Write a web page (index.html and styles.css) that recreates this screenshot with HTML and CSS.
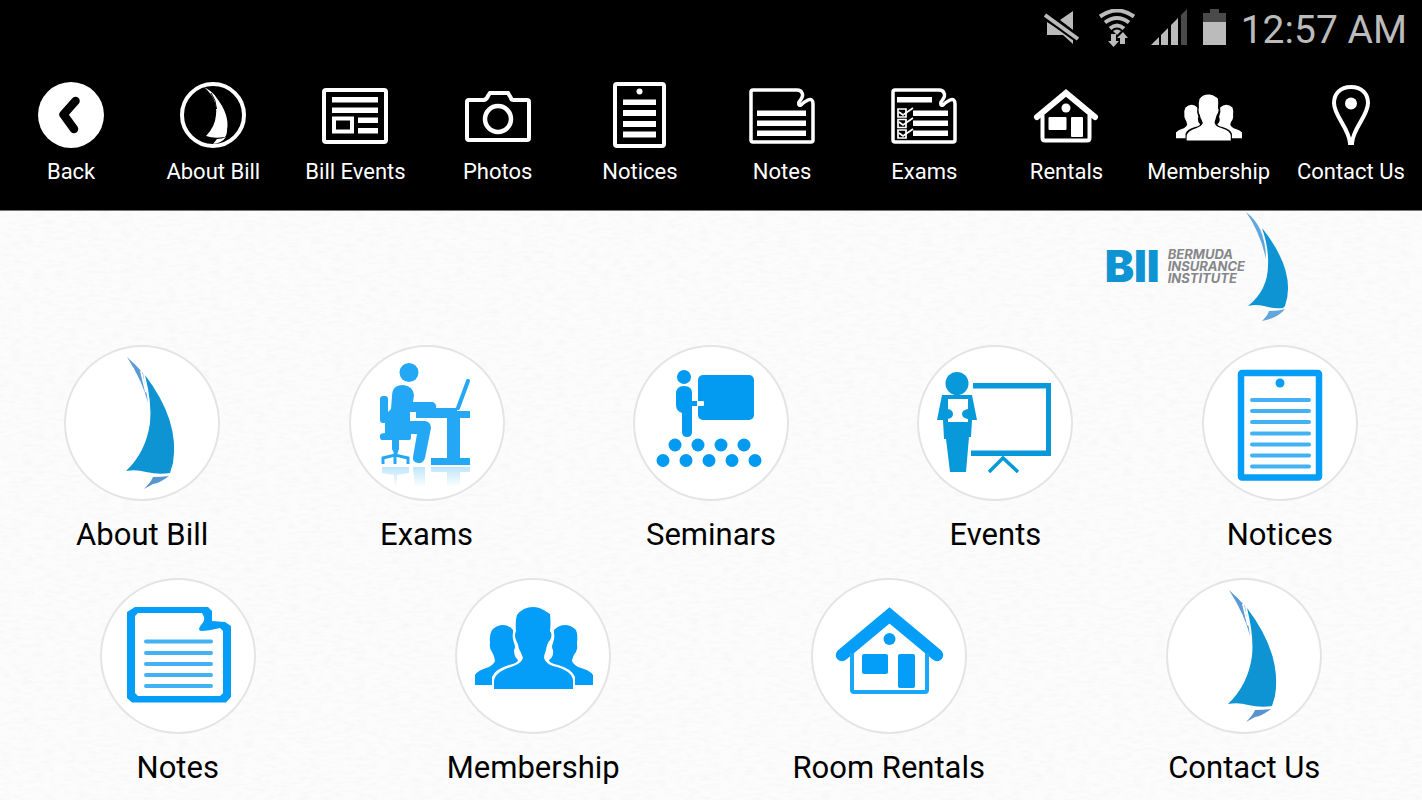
FILE: index.html
```html
<!DOCTYPE html>
<html lang="en">
<head>
<meta charset="utf-8">
<meta name="viewport" content="width=device-width, initial-scale=1">
<title>Bermuda Insurance Institute</title>
<link rel="stylesheet" href="styles.css">
</head>
<body>
<svg class="defs" width="0" height="0" aria-hidden="true">
  <symbol id="people" viewBox="0 0 118 82">
    <path d="M58 0C66 0 70 4 75 7Q76 16 75 24Q78 28 75 33Q72 36 71 43Q69 48 69 51Q71 58 82 60Q98 65 98 74V82H19V74Q20 65 36 60Q46 57 48 51Q46 45 44 42Q43 36 41 33Q39 28 41 24Q40 14 42 8Q48 0 58 0Z"/>
    <path d="M28 18Q34 18 38 23V26Q37 30 39 36Q41 40 39 43Q39 50 43 53Q43 56 34 58Q20 62 17 70V78H0V68Q3 63 14 60Q19 57 20 54Q19 48 17 45Q14 41 15 36Q14 28 17 23Q22 18 28 18Z"/>
    <path d="M90 18Q84 18 79 23V26Q80 30 78 36Q76 40 78 43Q79 50 74 53Q74 56 83 58Q97 62 100 70V78H118V68Q115 63 103 60Q98 57 97 54Q98 48 101 45Q103 41 102 36Q103 28 101 23Q96 18 90 18Z"/>
  </symbol>
  <symbol id="sail" viewBox="0 0 156 156">
    <path fill="#5a9bd5" d="M63 12Q72 20 79 28L81 41Q83 49 84 58Q79 37 63 12Z"/>
    <path fill="#fff" d="M76 26L78 26L83 48L81 47Z"/>
    <path fill="#0e93d3" d="M81 30Q116 76 109 118L106 128Q95 130 82 127Q72 124 62 126Q82 107 86 78Q88 58 81 30Z"/>
    <path fill="#5a94cf" d="M89 132Q97 132 105 131Q96 138 89 139L80 144Q87 137 89 132Z"/>
  </symbol>
</svg>

<header class="top">
  <div class="status">
    <svg width="36" height="36" viewBox="0 0 36 36" aria-label="Muted"><path fill="#bbb" d="M16 11L29 2V21ZM3 13V26H19L29 35V29Z"/><path stroke="#000" stroke-width="8" d="M1 6L34 30"/><path stroke="#bbb" stroke-width="4" d="M1 6L34 30"/></svg>
    <svg class="wifi" width="38" height="40" viewBox="0 0 38 40" aria-label="Wi-Fi"><g fill="none" stroke="#bbb" stroke-width="4"><path d="M2 7.500Q19-4.500 36 7.500M7 13.500Q19 4.500 31 13.500M12 19.500Q19 13.500 26 19.500"/></g><path fill="#bbb" d="M15 22Q19 19 23 22L19 26ZM13 25H18V32H21L15.500 38L10 32H13ZM22 35V29H19L25 23L30 29H27V35Z"/></svg>
    <svg class="signal" width="37" height="37" viewBox="0 0 37 37" aria-label="Signal"><path fill="#bbb" d="M0 36L8 28V36ZM10 26L17 19V36H10ZM20 16L27 9V36H20Z"/><path fill="#4a4a4a" d="M30 6L36 0V36H30Z"/></svg>
    <svg class="battery" width="23" height="36" viewBox="0 0 23 36" aria-label="Battery"><path fill="#4a4a4a" d="M7 0H16V4H23V13H0V4H7Z"/><path fill="#bbb" d="M0 13H23V36H0Z"/></svg>
    <time class="clock">12:57 AM</time>
  </div>
  <nav class="nav">
    <a href="#back"><svg viewBox="0 0 66 66"><circle cx="33" cy="33" r="33" fill="#fff"/><path d="M37.500 19L25.500 32.500L36 47" fill="none" stroke="#000" stroke-width="8.500" stroke-linecap="round" stroke-linejoin="round"/></svg>Back</a>
    <a href="#about"><svg viewBox="0 0 66 66"><circle cx="33" cy="33" r="31" fill="none" stroke="#fff" stroke-width="4"/><path fill="#fff" d="M24 5Q33 10 36 15Q50 33 47 48Q47 53 45 55Q34 57 26 54Q35 45 36 33Q38 17 24 5ZM37 57Q42 57 46 55Q42 61 33 62Z"/><path d="M31 11Q36 18 36.500 27" fill="none" stroke="#000" stroke-width="1"/></svg>About Bill</a>
    <a href="#bill-events"><svg viewBox="0 0 66 66"><rect x="2" y="8" width="62" height="52" rx="2" fill="none" stroke="#fff" stroke-width="4"/><path fill="#fff" d="M10 15H56V20.500H10ZM10 25.500H56V31H10ZM36 35.500H56V41H36ZM36 46H56V51.500H36Z"/><rect x="12" y="36.500" width="18" height="13" fill="none" stroke="#fff" stroke-width="4"/></svg>Bill Events</a>
    <a href="#photos"><svg viewBox="0 0 66 66"><path d="M4 18H19Q22 17 23 14L25 11H43L46 16Q46 18 49 18H62Q64 18 64 20V56Q64 58 62 58H4Q2 58 2 56V20Q2 18 4 18Z" fill="none" stroke="#fff" stroke-width="4"/><circle cx="33" cy="37" r="13" fill="none" stroke="#fff" stroke-width="4.500"/></svg>Photos</a>
    <a href="#notices"><svg viewBox="0 0 66 66"><rect x="8" y="2" width="49" height="62" rx="2" fill="none" stroke="#fff" stroke-width="4"/><circle cx="32.500" cy="9.500" r="3" fill="#fff"/><path fill="#fff" d="M16 17.500H49V23H16ZM16 28H49V34H16ZM16 39H49V45H16ZM16 49.500H49V55.500H16Z"/></svg>Notices</a>
    <a href="#notes"><svg viewBox="0 0 66 66"><path d="M48 8H4Q2 8 2 10V58Q2 60 4 60H62Q64 60 64 58V22Q64 16 59 18Q55 20 52 23Q49 24 50 20Q55 14 53 11Q52 8 48 8Z" fill="none" stroke="#fff" stroke-width="3.500"/><path fill="#fff" d="M8 28.500H57V34H8ZM8 38.500H57V44H8ZM8 48.500H57V54H8Z"/></svg>Notes</a>
    <a href="#exams"><svg viewBox="0 0 66 66"><path d="M48 8H4Q2 8 2 10V58Q2 60 4 60H62Q64 60 64 58V22Q64 16 59 18Q55 20 52 23Q49 24 50 20Q55 14 53 11Q52 8 48 8Z" fill="none" stroke="#fff" stroke-width="3.500"/><path fill="#fff" d="M6 15H41V20.500H6ZM22 28.500H57V34H22ZM22 38.500H57V44H22ZM22 48.500H57V54H22Z"/><g fill="none" stroke="#fff" stroke-width="1.700"><path d="M7 27H15V35H7ZM7 37.500H15V45.500H7ZM7 48H15V56H7Z"/><path d="M8 30L12 33L22 26M8 40L12 43L22 36M8 51L12 54L22 47"/></g></svg>Exams</a>
    <a href="#rentals"><svg viewBox="0 0 66 66"><path d="M4 35L33 11L62 35" fill="none" stroke="#fff" stroke-width="6" stroke-linecap="round"/><path d="M9.500 33V56Q9.500 58.500 12 58.500H54Q56.500 58.500 56.500 56V33" fill="none" stroke="#fff" stroke-width="4"/><g fill="#fff"><circle cx="33" cy="26" r="4.500"/><rect x="15.500" y="35" width="18" height="13" rx="1"/><rect x="38" y="35" width="12" height="20" rx="1"/></g></svg>Rentals</a>
    <a href="#membership"><svg viewBox="0 0 66 66"><use href="#people" x="0" y="12" width="66" height="47" fill="#fff"/></svg>Membership</a>
    <a href="#contact"><svg viewBox="0 0 66 66"><path d="M33 5C22 5 16 12 16 21C16 34 31 46 32 61H34C35 46 50 34 50 21C50 12 44 5 33 5Z" fill="none" stroke="#fff" stroke-width="4"/><circle cx="33" cy="21.500" r="6" fill="#fff"/></svg>Contact Us</a>
  </nav>
</header>

<main class="home">
  <svg class="paper" width="100%" height="100%" aria-hidden="true">
    <filter id="grain" x="0" y="0" width="100%" height="100%"><feTurbulence type="fractalNoise" baseFrequency="0.09 0.3" numOctaves="3" seed="4"/><feColorMatrix values="0 0 0 0 0.5  0 0 0 0 0.5  0 0 0 0 0.5  0.17 0 0 0 -0.07"/></filter>
    <rect width="100%" height="100%" filter="url(#grain)"/>
  </svg>
  <div class="brand">
    <span class="brand-short">BII</span>
    <span class="brand-full">BERMUDA<br>INSURANCE<br>INSTITUTE</span>
    <svg width="44" height="109" viewBox="0 0 44 109"><path fill="#62a6de" d="M1 0Q10 7 15 17Q21 31 21 47Q15 20 1 0Z"/><path fill="#0e93d3" d="M17 16Q52 60 40 94L38 96Q28 97 19 94Q10 92 3 94Q23 78 23 53Q24 36 17 16Z"/><path fill="#62a6de" d="M24 99Q34 99 40 97Q33 106 17 109Q23 103 24 99Z"/></svg>
  </div>
  <div class="row">
    <a class="tile" href="#about"><svg class="disc" viewBox="0 0 156 156"><use href="#sail"/></svg>About Bill</a>
    <a class="tile" href="#exams"><svg class="disc" viewBox="0 0 156 156">
      <defs><linearGradient id="fade" x1="0" y1="0" x2="0" y2="1"><stop offset="0" stop-color="#24a8f5" stop-opacity=".3"/><stop offset="1" stop-color="#24a8f5" stop-opacity="0"/></linearGradient></defs>
      <g fill="#24a8f5"><circle cx="60" cy="27.500" r="9.500"/><rect x="31" y="51" width="8" height="27" rx="3"/><path d="M43 51Q43 40 54 40Q64 41 65 50L64 57H84Q88 59 87 63H108V66H121V73H67V67H61V76H76Q82 77 82 83L76 113Q74 119 69 118Q63 117 64 112L68 89H62V93Q62 95 60 95H50V104L48 110H46L43 104V95H33Q31 95 31 92V90Q32 88 36 88V78Q39 76 39 67L42 64Z"/><path d="M98 72H111V113H121V120H82V113H98Z"/></g>
      <path d="M119 36L109 63" fill="none" stroke="#24a8f5" stroke-width="4" stroke-linecap="round"/>
      <path d="M34 119V113L46 110L59 113V119M46 108V119" fill="none" stroke="#24a8f5" stroke-width="3"/>
      <path fill="url(#fade)" d="M33 122H60V128L48 130V142H45V130L33 128ZM64 122H76V142H66ZM82 122H121V127H111V142H98V127H82Z"/></svg>Exams</a>
    <a class="tile" href="#seminars"><svg class="disc" viewBox="0 0 156 156"><g fill="#039bf1"><circle cx="51" cy="32" r="7"/><rect x="65" y="30" width="56" height="45" rx="5"/><path d="M43 49Q43 41 51 41Q59 41 59 48V87Q59 92 54 92Q49 92 49 87V68Q43 66 43 60Z"/><rect x="58" y="56" width="8" height="5"/><circle cx="42" cy="100" r="6.500"/><circle cx="65" cy="100" r="6.500"/><circle cx="88" cy="100" r="6.500"/><circle cx="111" cy="100" r="6.500"/><circle cx="30" cy="115.500" r="6.500"/><circle cx="53" cy="115.500" r="6.500"/><circle cx="76" cy="115.500" r="6.500"/><circle cx="99" cy="115.500" r="6.500"/><circle cx="122" cy="115.500" r="6.500"/></g><rect x="64" y="56" width="7" height="5" rx="1" fill="#fff"/></svg>Seminars</a>
    <a class="tile" href="#events"><svg class="disc" viewBox="0 0 156 156"><g fill="#0799d9"><circle cx="40" cy="38.500" r="11.500"/><path d="M25 50H55L60 75H55L54 92H52L49 127H33L29 94H27L26 75H20Z"/><path d="M56 38H134V111H54V105.500H129V43.500H56Z"/></g><path fill="#fff" d="M31 54H51V64Q45 65 45 69Q45 73 51 74V77H31V74Q36 73 36 69Q36 65 31 64Z"/><path d="M72 127L86 113L101 127" fill="none" stroke="#0799d9" stroke-width="3.500"/></svg>Events</a>
    <a class="tile" href="#notices"><svg class="disc" viewBox="0 0 156 156"><rect x="39" y="28" width="78" height="104.500" rx="1" fill="none" stroke="#049ef8" stroke-width="6.500" stroke-linejoin="round"/><circle cx="78" cy="38" r="4.500" fill="#049ef8"/><path stroke="#42b2f5" stroke-width="4" stroke-linecap="round" d="M50 55H107M50 66H107M50 77H107M50 88.500H107M50 99.500H107M50 110.500H107M50 121.500H107"/></svg>Notices</a>
  </div>
  <div class="row">
    <a class="tile" href="#notes"><svg class="disc" viewBox="0 0 156 156"><path fill="#049ef8" fill-rule="evenodd" d="M35 29H108L112 33V43L125 44L131 48V119L126 124.500H32L27 120V34ZM38 35L35 38V115L38 118H120L123 115V53L120 50Q108 53 101 53Q97 52 101 47Q105 43 104 39L102 35Z"/><path stroke="#42b2f5" stroke-width="4" stroke-linecap="round" d="M46 63.500H111M46 75H111M46 86H111M46 97H111M46 108H111"/></svg>Notes</a>
    <a class="tile" href="#membership"><svg class="disc" viewBox="0 0 156 156"><use href="#people" x="20" y="29" width="118" height="82" fill="#049ef8"/></svg>Membership</a>
    <a class="tile" href="#rentals"><svg class="disc" viewBox="0 0 156 156"><path d="M31 77L78.500 37.500L126 77" fill="none" stroke="#049ef8" stroke-width="12.500" stroke-linecap="round"/><path d="M41 75V112Q41 114 43 114H114Q116 114 116 112V75" fill="none" stroke="#1ba7f8" stroke-width="4"/><g fill="#049ef8"><circle cx="78.500" cy="61" r="6"/><rect x="51" y="76" width="26" height="20" rx="2"/><rect x="87" y="76" width="17" height="34" rx="2"/></g></svg>Room Rentals</a>
    <a class="tile" href="#contact"><svg class="disc" viewBox="0 0 156 156"><use href="#sail"/></svg>Contact Us</a>
  </div>
</main>
</body>
</html>
```
FILE: styles.css
```css
* {
  box-sizing: border-box;
}

body {
  margin: 0;
  min-height: 100vh;
  display: flex;
  flex-direction: column;
  background: #fcfcfc;
  color: #000;
  font-family: Roboto, "Liberation Sans", sans-serif;
}

a {
  color: inherit;
  text-decoration: none;
}

svg {
  display: block;
  flex: none;
}

.defs {
  position: absolute;
}

.top {
  background: #000;
  color: #fff;
  padding-bottom: 22px;
  border-bottom: 1px solid #777;
}

.status {
  display: flex;
  justify-content: flex-end;
  align-items: flex-start;
  gap: 15px;
  padding: 9px 15px 0 0;
}

.wifi {
  margin-left: 3px;
}

.clock {
  color: #bbb;
  font-size: 39px;
  line-height: 43px;
}

.nav {
  display: grid;
  grid-template-columns: repeat(10, minmax(0, 1fr));
  padding-top: 30px;
}

.nav a {
  display: flex;
  flex-direction: column;
  align-items: center;
  gap: 8px;
  font-size: 22px;
  line-height: 32px;
  white-space: nowrap;
}

.nav svg {
  width: 66px;
  height: 66px;
}

.home {
  position: relative;
  flex: 1;
}

.paper {
  position: absolute;
  inset: 0;
  z-index: -1;
}

.brand {
  display: flex;
  justify-content: flex-end;
  align-items: center;
  height: 110px;
  margin-bottom: 24px;
  padding-right: 133px;
}

.brand-short {
  margin-right: 8px;
  color: #0e93d3;
  font-family: Inter, sans-serif;
  font-size: 44px;
  font-weight: 900;
  line-height: 48px;
}

.brand-full {
  color: #85878a;
  font-family: Inter, sans-serif;
  font-size: 13px;
  font-style: italic;
  font-weight: 700;
  line-height: 12px;
}

.row {
  display: flex;
  margin-bottom: 23px;
}

.tile {
  flex: 1;
  display: flex;
  flex-direction: column;
  align-items: center;
  gap: 14px;
  font-size: 31px;
  line-height: 40px;
  white-space: nowrap;
}

.row:last-child {
  margin-bottom: 8px;
}

.disc {
  width: 156px;
  height: 156px;
  border-radius: 50%;
  background: #fff;
  box-shadow: inset 0 0 0 2px #e4e4e4;
}
```
